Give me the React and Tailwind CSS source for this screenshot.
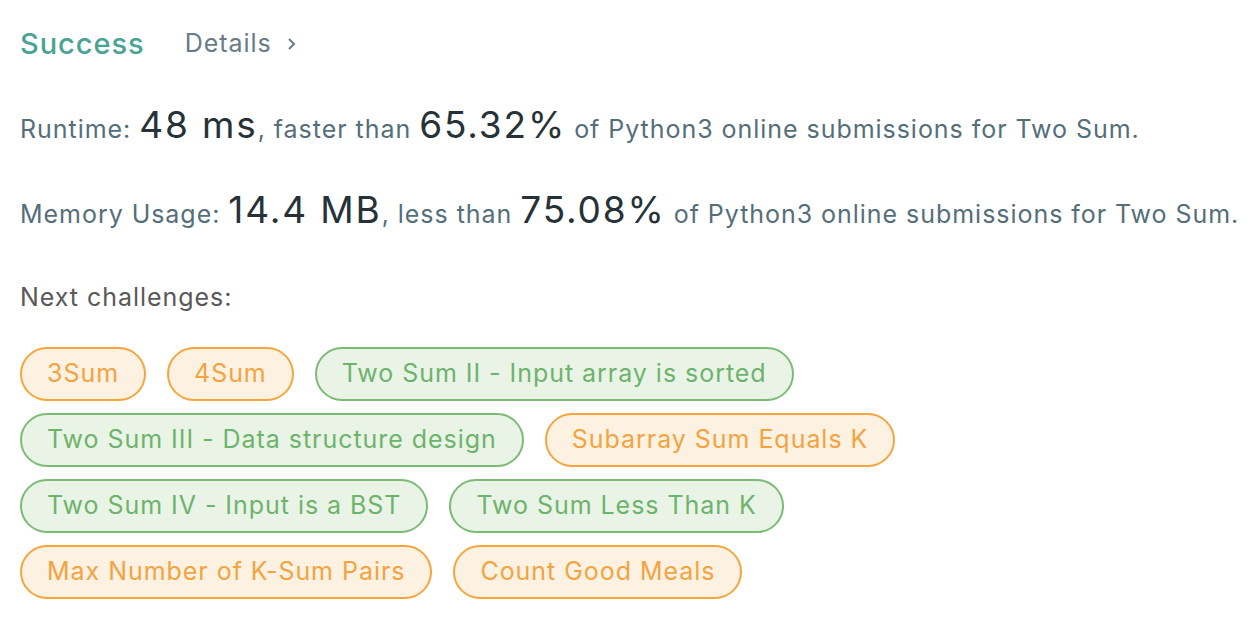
import React from "react";

const challenges = [
  { name: "3Sum", level: "medium" },
  { name: "4Sum", level: "medium" },
  { name: "Two Sum II - Input array is sorted", level: "easy" },
  { name: "Two Sum III - Data structure design", level: "easy" },
  { name: "Subarray Sum Equals K", level: "medium" },
  { name: "Two Sum IV - Input is a BST", level: "easy" },
  { name: "Two Sum Less Than K", level: "easy" },
  { name: "Max Number of K-Sum Pairs", level: "medium" },
  { name: "Count Good Meals", level: "medium" },
];

const big = "text-[37px] tracking-[0.05em] text-[#263238]";

export default function App() {
  return (
    <div
      className="min-h-screen bg-white px-5 pt-[22px] tracking-[0.06em]"
      style={{ fontFamily: "Inter, 'Noto Sans', sans-serif" }}
    >
      {/* Header */}
      <div className="flex items-center h-[44px]">
        <span className="text-[29px] font-medium text-[#4aa393]">Success</span>
        <span className="ml-[40px] text-[25px] text-[#687b88]">Details</span>
        <svg className="ml-[15px]" width="10" height="14" viewBox="0 0 10 14">
          <path d="M2 2l5 5-5 5" fill="none" stroke="#687b88" strokeWidth="2" />
        </svg>
      </div>

      {/* Stats */}
      <div className="mt-[39px] text-[25px] text-[#546e7a] leading-[40px] whitespace-nowrap">
        Runtime: <span className={big}>48 ms</span>, faster than{" "}
        <span className={big}>65.32%</span> of Python3 online submissions for Two Sum.
      </div>
      <div className="mt-[41px] text-[25px] text-[#546e7a] leading-[40px] whitespace-nowrap">
        Memory Usage: <span className={big}>14.4 MB</span>, less than{" "}
        <span className={big}>75.08%</span> of Python3 online submissions for Two Sum.
      </div>

      <div className="mt-[45px] text-[25px] text-[#595959]">Next challenges:</div>

      {/* Tags */}
      <div className="mt-[30px] max-w-[1190px] flex flex-wrap gap-x-[21px] gap-y-3">
        {challenges.map((c) => (
          <span
            key={c.name}
            className={
              c.level === "easy"
                ? "h-[54px] flex items-center px-[25px] rounded-full border-2 border-[#7bbb76] bg-[#e9f4e7] text-[#6db36b] text-[25px]"
                : "h-[54px] flex items-center px-[25px] rounded-full border-2 border-[#f5a53c] bg-[#fdf2e2] text-[#f3a33f] text-[25px]"
            }
          >
            {c.name}
          </span>
        ))}
      </div>
    </div>
  );
}
